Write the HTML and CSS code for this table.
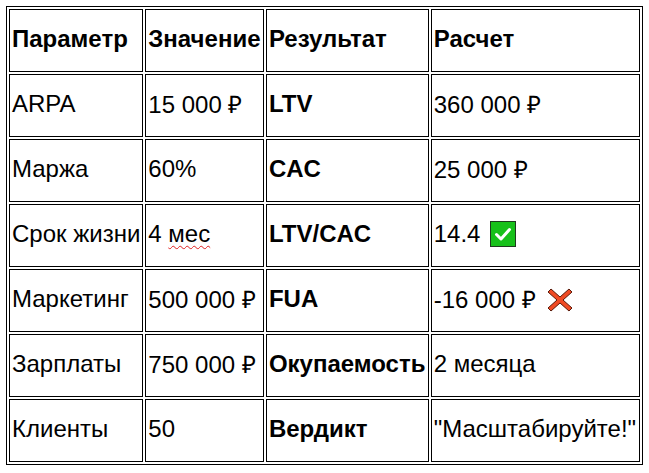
FILE: index.html
```html
<!DOCTYPE html>
<html lang="ru">
<head>
<meta charset="utf-8">
<link rel="stylesheet" href="styles.css">
</head>
<body>
<table class="grid">
  <tr>
    <th class="c1">Параметр</th><th class="c2">Значение</th><th class="c3">Результат</th><th class="c4">Расчет</th>
  </tr>
  <tr>
    <td>ARPA</td><td>15 000 ₽</td><td class="b">LTV</td><td>360 000 ₽</td>
  </tr>
  <tr>
    <td>Маржа</td><td>60%</td><td class="b">CAC</td><td>25 000 ₽</td>
  </tr>
  <tr>
    <td>Срок жизни</td><td>4 <span class="spell">мес</span></td><td class="b">LTV/CAC</td>
    <td>14.4 <svg class="ico" width="26" height="26" viewBox="0 0 26 26"><rect x="0.5" y="0.5" width="25" height="25" fill="#17c11a" stroke="#1f3a1f"/><path d="M6.5 13.5 L11 18 L19.5 8.5" fill="none" stroke="#fff" stroke-width="3" stroke-linecap="round" stroke-linejoin="round"/></svg></td>
  </tr>
  <tr>
    <td>Маркетинг</td><td>500 000 ₽</td><td class="b">FUA</td>
    <td>-16 000 ₽ <svg class="ico x" width="26" height="26" viewBox="0 0 26 26"><path d="M4 2 L13 10 L22 2 L25 5 L16 13 L25 21 L22 24 L13 16 L4 24 L1 21 L10 13 L1 5 Z" fill="#f04a24" stroke="#5a1a0a" stroke-width="1" stroke-linejoin="round"/></svg></td>
  </tr>
  <tr>
    <td>Зарплаты</td><td>750 000 ₽</td><td class="b">Окупаемость</td><td>2 месяца</td>
  </tr>
  <tr>
    <td>Клиенты</td><td>50</td><td class="b">Вердикт</td><td>"Масштабируйте!"</td>
  </tr>
</table>
</body>
</html>
```
FILE: styles.css
```css
body {
  margin: 6px;
  background: #fff;
  font-family: "Liberation Sans", Arial, sans-serif;
  font-size: 24px;
  color: #000;
}
.grid {
  border: 1px solid #000;
  border-spacing: 2px;
  table-layout: fixed;
}
.grid th,
.grid td {
  border: 1px solid #000;
  padding: 0 2px 4px;
  height: 57px;
  text-align: left;
  vertical-align: middle;
  font-weight: normal;
  white-space: nowrap;
  overflow: visible;
}
.grid th,
.grid td.b {
  font-weight: bold;
}
.c1 { width: 128px; }
.c2 { width: 113px; }
.c3 { width: 157px; }
.c4 { width: 204px; }
.spell {
  text-decoration: underline wavy #e02020;
  text-decoration-thickness: 1px;
  text-underline-offset: 3px;
}
.ico {
  vertical-align: -5px;
  margin-left: 3px;
}
.ico.x {
  margin-left: 5px;
}
```
